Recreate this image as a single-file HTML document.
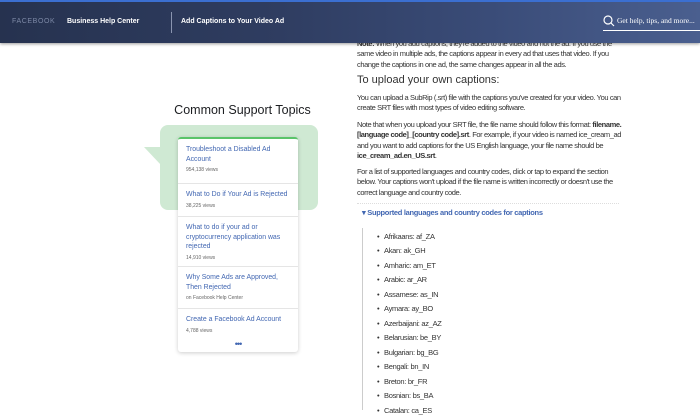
<!DOCTYPE html>
<html><head><style>
*{margin:0;padding:0;box-sizing:border-box}
body{width:700px;height:410px;overflow:hidden;background:#fff;font-family:"Liberation Sans",sans-serif;position:relative}
.hdr{position:absolute;left:0;top:0;width:700px;height:43px;background:linear-gradient(90deg,#26324f 0%,#2f3d61 40%,#3a4c78 70%,#4a5f8f 100%);border-top:2px solid #3b6fd1;box-shadow:0 1px 3px rgba(0,0,0,.4)}
.hdr span{position:absolute;color:#fff;font-size:7px;font-weight:bold;top:16px}
.p{position:absolute;left:357px;white-space:nowrap;font-size:7.5px;line-height:10.3px;color:#333;letter-spacing:-0.4px}
.li{position:absolute;left:384px;font-size:7.5px;color:#333;letter-spacing:-0.3px}
.li:before{content:"•";position:absolute;left:-7px}
.t{color:#4267b2;font-size:6.9px;line-height:9.5px}
.v{color:#666;font-size:5px;margin-top:3px}
.it{border-bottom:1px solid #e5e5e5;padding:6px 8px 5px 8px}
</style></head><body>
<div style="position:absolute;left:160px;top:125px;width:158px;height:85px;background:#cfe9d3;border-radius:8px"></div>
<svg style="position:absolute;left:144px;top:146px" width="20" height="24"><polygon points="0,1 17,1 17,19" fill="#cfe9d3"/></svg>
<div style="position:absolute;left:145px;top:103px;width:195px;text-align:center;font-size:12.5px;color:#1c1e21">Common Support Topics</div>
<div style="position:absolute;left:178px;top:137px;width:120px;height:215px;background:#fff;border-top:2px solid #5ac46a;border-radius:3px;box-shadow:0 1px 4px rgba(0,0,0,.2)">
<div class="it" style="height:45px"><div class="t">Troubleshoot a Disabled Ad Account</div><div class="v">954,138 views</div></div>
<div class="it" style="height:33px"><div class="t">What to Do if Your Ad is Rejected</div><div class="v">38,225 views</div></div>
<div class="it" style="height:50px"><div class="t">What to do if your ad or cryptocurrency application was rejected</div><div class="v">14,910 views</div></div>
<div class="it" style="height:42px"><div class="t">Why Some Ads are Approved, Then Rejected</div><div class="v">on Facebook Help Center</div></div>
<div class="it" style="height:32px;border:0"><div class="t">Create a Facebook Ad Account</div><div class="v">4,788 views</div></div>
<div style="text-align:center;color:#4267b2;font-size:9px;letter-spacing:-1px;line-height:6px">•••</div>
</div>
<div class="p" style="top:39px"><b>Note:</b> When you add captions, they're added to the video and not the ad. If you use the<br>same video in multiple ads, the captions appear in every ad that uses that video. If you<br>change the captions in one ad, the same changes appear in all the ads.</div>
<div class="p" style="top:75px;font-size:11px;color:#333;letter-spacing:0">To upload your own captions:</div>
<div class="p" style="top:93px">You can upload a SubRip (.srt) file with the captions you've created for your video. You can<br>create SRT files with most types of video editing software.</div>
<div class="p" style="top:120px">Note that when you upload your SRT file, the file name should follow this format: <b>filename.</b><br><b>[language code]_[country code].srt</b>. For example, if your video is named ice_cream_ad<br>and you want to add captions for the US English language, your file name should be<br><b>ice_cream_ad.en_US.srt</b>.</div>
<div class="p" style="top:167px">For a list of supported languages and country codes, click or tap to expand the section<br>below. Your captions won't upload if the file name is written incorrectly or doesn't use the<br>correct language and country code.</div>
<div style="position:absolute;left:357px;top:203px;width:262px;border-top:1px dotted #ddd"></div>
<div style="position:absolute;left:362px;top:208px;font-size:7.5px;font-weight:bold;color:#4267b2;letter-spacing:-0.3px">▾ Supported languages and country codes for captions</div>
<div style="position:absolute;left:362px;top:228px;width:1px;height:182px;background:#ccc"></div>
<div class="li" style="top:232px">Afrikaans: af_ZA</div>
<div class="li" style="top:246px">Akan: ak_GH</div>
<div class="li" style="top:261px">Amharic: am_ET</div>
<div class="li" style="top:275px">Arabic: ar_AR</div>
<div class="li" style="top:290px">Assamese: as_IN</div>
<div class="li" style="top:304px">Aymara: ay_BO</div>
<div class="li" style="top:319px">Azerbaijani: az_AZ</div>
<div class="li" style="top:333px">Belarusian: be_BY</div>
<div class="li" style="top:348px">Bulgarian: bg_BG</div>
<div class="li" style="top:362px">Bengali: bn_IN</div>
<div class="li" style="top:377px">Breton: br_FR</div>
<div class="li" style="top:391px">Bosnian: bs_BA</div>
<div class="li" style="top:406px">Catalan: ca_ES</div>
<div class="hdr">
<span style="left:12px;color:#7d89a6;font-weight:normal;letter-spacing:.6px">FACEBOOK</span>
<span style="left:67px">Business Help Center</span>
<div style="position:absolute;left:171px;top:10px;width:1px;height:21px;background:#8a95b0"></div>
<span style="left:181px">Add Captions to Your Video Ad</span>
<svg style="position:absolute;left:603px;top:13px" width="12" height="12"><circle cx="5" cy="5" r="4" stroke="#fff" stroke-width="1.2" fill="none"/><line x1="8" y1="8" x2="11" y2="11" stroke="#fff" stroke-width="1.2"/></svg>
<span style="left:617px;font-weight:normal;font-family:'Liberation Serif',serif;font-size:7.5px;top:14px">Get help, tips, and more...</span>
<div style="position:absolute;left:603px;top:28px;width:97px;height:1px;background:#fff"></div>
</div>
</body></html>
